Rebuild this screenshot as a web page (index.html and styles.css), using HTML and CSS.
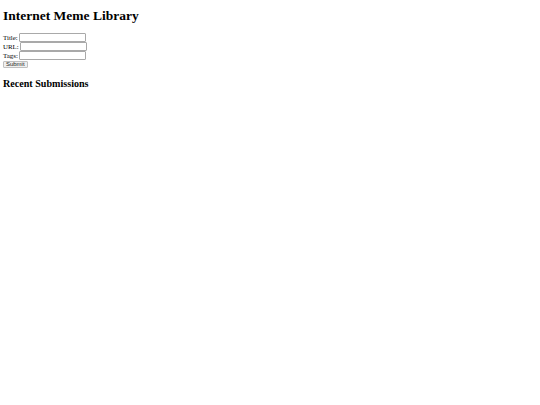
FILE: index.html
```html
<!DOCTYPE html>
<html lang="en">
<head>
<meta charset="utf-8">
<title>Internet Meme Library</title>
<link rel="stylesheet" href="styles.css">
</head>
<body class="page">
<h1 class="page-title">Internet Meme Library</h1>
<form class="meme-form">
  <label class="field">Title: <input class="field-input" type="text"></label>
  <label class="field">URL: <input class="field-input" type="text"></label>
  <label class="field">Tags: <input class="field-input" type="text"></label>
  <button class="submit-btn" type="submit">Submit</button>
</form>
<h2 class="section-title">Recent Submissions</h2>
<div class="submissions"></div>
</body>
</html>
```

FILE: styles.css
```css
html {
  background: #fff;
}
.page {
  margin: 0;
  padding: 0 3px;
  font-family: "Liberation Serif", "Times New Roman", serif;
  font-size: 6.9px;
  color: #000;
}
.page-title {
  font-size: 13.5px;
  font-weight: bold;
  line-height: 15.5px;
  margin: 8px 0 9px;
}
.meme-form {
  display: flex;
  flex-direction: column;
  align-items: flex-start;
}
.field {
  display: flex;
  align-items: center;
  gap: 1.6px;
  height: 9px;
  line-height: 9px;
}
.field-input {
  box-sizing: border-box;
  width: 67px;
  height: 9px;
  margin: 0;
  padding: 0;
  border: 1px solid #a9a9a9;
  border-radius: 1px;
  background: #fff;
}
.submit-btn {
  box-sizing: border-box;
  margin: 1px 0 0;
  height: 7.5px;
  width: 24.5px;
  padding: 0;
  font-family: "Liberation Sans", Arial, sans-serif;
  font-size: 6px;
  line-height: 5.5px;
  color: #222;
  background: #efefef;
  border: 1px solid #c0c0c0;
  border-radius: 1px;
}
.section-title {
  font-size: 10.1px;
  font-weight: bold;
  line-height: 11.6px;
  margin: 10px 0 8px;
}
```
